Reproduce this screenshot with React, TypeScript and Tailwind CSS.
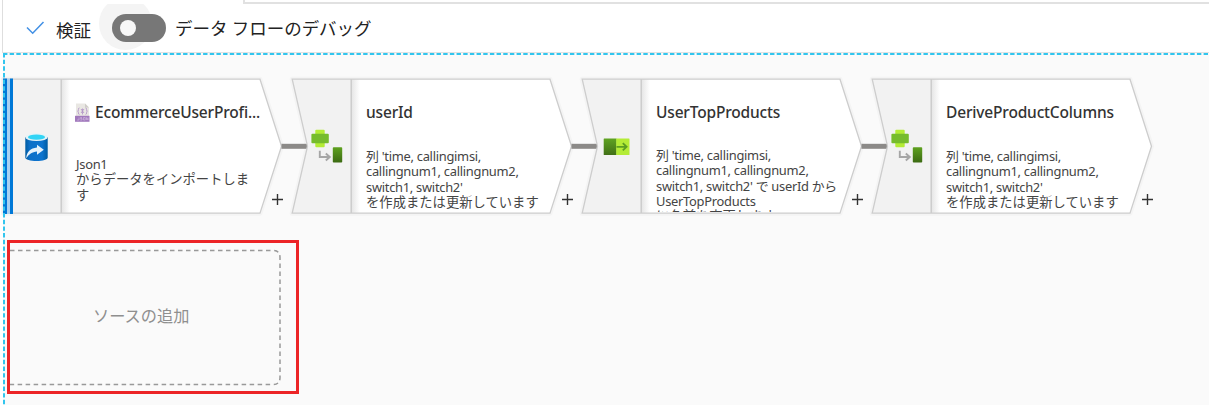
import React from "react";

type Kind = "source" | "derive" | "select";

interface Line {
  text: string;
  cls: string;
}

interface FlowNode {
  id: string;
  kind: Kind;
  title: string;
  lines: Line[];
}

const jp = "tracking-[0.02px] text-[13.3px]";
const lat = "tracking-[-0.28px] text-[12.9px]";

const deriveLines: Line[] = [
  { text: "列 'time, callingimsi,", cls: lat },
  { text: "callingnum1, callingnum2,", cls: lat },
  { text: "switch1, switch2'", cls: lat },
  { text: "を作成または更新しています", cls: jp },
];

const nodes: FlowNode[] = [
  {
    id: "source",
    kind: "source",
    title: "EcommerceUserProfi...",
    lines: [
      { text: "Json1", cls: lat },
      { text: "からデータをインポートしま", cls: jp },
      { text: "す", cls: jp },
    ],
  },
  { id: "userId", kind: "derive", title: "userId", lines: deriveLines },
  {
    id: "top",
    kind: "select",
    title: "UserTopProducts",
    lines: [
      { text: "列 'time, callingimsi,", cls: lat },
      { text: "callingnum1, callingnum2,", cls: lat },
      { text: "switch1, switch2' で userId から", cls: lat },
      { text: "UserTopProducts", cls: lat },
      { text: "に名前を変更します", cls: jp },
    ],
  },
  { id: "columns", kind: "derive", title: "DeriveProductColumns", lines: deriveLines },
];

function SourceIcon() {
  return (
    <svg className="ml-[22px] mt-[1px] shrink-0" width="23" height="29" viewBox="0 0 23 29">
      <defs>
        <linearGradient id="cyl" x1="0" x2="1">
          <stop offset="0" stopColor="#005ba1" />
          <stop offset="0.2" stopColor="#0d70c8" />
          <stop offset="0.75" stopColor="#0d74cf" />
          <stop offset="1" stopColor="#005ba1" />
        </linearGradient>
      </defs>
      <path d="M0.3 4v20.5c0 2 5 3.6 11.2 3.6s11.2-1.6 11.2-3.6V4z" fill="url(#cyl)" />
      <ellipse cx="11.5" cy="4.2" rx="11.2" ry="3.9" fill="#e4f3f7" />
      <ellipse cx="11.5" cy="4.2" rx="8.5" ry="2.6" fill="#32d4f5" />
      <path d="M1.2 25.5C1.6 18.500 5.4 15.300 12 14.500V11.800l6.800 4.900-6.800 5v-3.200C7 19 4 21 1.200 25.500z" fill="#e6f2fb" />
    </svg>
  );
}

function DeriveIcon() {
  return (
    <svg className="ml-[17px] shrink-0" width="34" height="35" viewBox="0 0 34 35">
      <defs>
        <linearGradient id="leaf" x1="0" y1="0" x2="0" y2="1">
          <stop offset="0" stopColor="#5ea11f" />
          <stop offset="1" stopColor="#3c6a13" />
        </linearGradient>
      </defs>
      <rect x="5.3" y="0.8" width="9.4" height="17.4" rx="1" fill="#b4ec36" />
      <rect x="1.4" y="4.7" width="17.4" height="9.6" rx="1" fill="#76bc2d" />
      <path d="M9.8 21.8v6.2h9M15.800 24.500l4 3.500-4 3.500" fill="none" stroke="#a6a6a6" strokeWidth="1.9" />
      <rect x="22.8" y="18.2" width="9.4" height="15.4" rx="0.8" fill="url(#leaf)" />
    </svg>
  );
}

function SelectIcon() {
  return (
    <svg className="ml-[20px] mt-[1px] shrink-0" width="28" height="18" viewBox="0 0 28 18">
      <defs>
        <linearGradient id="block" x1="0" y1="0" x2="0" y2="1">
          <stop offset="0" stopColor="#5fa322" />
          <stop offset="1" stopColor="#416f17" />
        </linearGradient>
      </defs>
      <rect x="0.7" y="0.5" width="13" height="16.6" rx="0.5" fill="url(#block)" />
      <rect x="13.2" y="0.5" width="13.3" height="16.6" rx="0.5" fill="#b4ec36" />
      <path d="M13.5 8.800h10M19.800 5.200l3.800 3.600-3.800 3.600" fill="none" stroke="#5b9e22" strokeWidth="1.800" />
    </svg>
  );
}

function JsonIcon() {
  return (
    <svg width="17" height="20" viewBox="0 0 17 20" className="mr-[4px] shrink-0">
      <path d="M2 .5h9l4 4V18H2z" fill="#e9e7e3" />
      <path d="M11 .5l4 4h-4z" fill="#cfcdc8" />
      <path
        d="M5.500 5q-1.300 0-1.100 1.600T3.600 8.200q1 .1.800 1.600t1.100 1.600M11.500 5q1.300 0 1.100 1.600t.8 1.600q-1 .1-.8 1.600t-1.100 1.600M7 6l3 4M10 6L7 10M8.500 5.500v6"
        fill="none"
        stroke="#b497c8"
        strokeWidth=".9"
      />
      <rect x="1" y="12.800" width="14.500" height="6" fill="#a27abd" />
      <path
        d="M3 17h2v-2.500M8 14.500H6.500v1H8V17H6.200M9.500 14.500h1.700V17H9.500zM12.500 17v-2.500l1.500 2.500v-2.500"
        fill="none"
        stroke="#cdb4dc"
        strokeWidth=".7"
      />
    </svg>
  );
}

function NodeShape({ kind }: { kind: Kind }) {
  const first = kind === "source";
  const outline = first
    ? "M0.5 1.200H257L278.500 68.200 257 135.200H0.500z"
    : "M-.8 1.200H257L278.500 68.200 257 135.200H-.8L14.500 68.200z";
  const side = first ? "M0.500 1.200H58V135.200H0.500z" : "M-.8 1.200H58V135.200H-.8L14.500 68.200z";
  return (
    <svg className="absolute left-0 top-0 overflow-visible" width="280" height="137">
      <defs>
        <linearGradient id="fold" x1="0" x2="1">
          <stop offset="0" stopColor="#e4e4e4" />
          <stop offset="1" stopColor="#ffffff" />
        </linearGradient>
      </defs>
      <path d={outline} fill="#fff" stroke="#f4f4f4" strokeWidth="5" strokeLinejoin="round" />
      {!first && <path d="M-11.500 68.300H14.500" stroke="#8c8a88" strokeWidth="5" />}
      <path d={outline} fill="#fff" />
      <path d={side} fill="#f2f2f2" />
      <rect x="58" y="1" width="9" height="134" fill="url(#fold)" />
      <path d="M58.200 1V135" stroke="#cccccc" strokeWidth="1.500" />
      <path d={outline} fill="none" stroke="#cdcdcd" strokeWidth="1.300" />
      {first && (
        <>
          <path d="M2 .5V136" stroke="#0078d7" strokeWidth="4" />
          <path d="M5.500 .5V136" stroke="#a9d0f1" strokeWidth="3" />
          <path d="M8.500 .5V136" stroke="#0078d7" strokeWidth="3" />
        </>
      )}
    </svg>
  );
}

function NodeCard({ node }: { node: FlowNode }) {
  const isSource = node.kind === "source";
  return (
    <section className="relative h-[137px] w-[290px] shrink-0">
      <NodeShape kind={node.kind} />
      <div className="relative flex h-full">
        <div className="flex w-[58px] shrink-0 items-center">
          {isSource && <SourceIcon />}
          {node.kind === "derive" && <DeriveIcon />}
          {node.kind === "select" && <SelectIcon />}
        </div>
        <div className="flex h-[134px] w-[202px] shrink-0 flex-col overflow-hidden pl-[15px] pt-[23px]">
          <h2
            className={
              "flex h-[24px] shrink-0 items-center whitespace-nowrap text-[15.5px] font-medium tracking-[-0.17px] text-[#333] " +
              (isSource ? "-ml-[2px]" : "")
            }
          >
            {isSource && <JsonIcon />}
            {node.title}
          </h2>
          <div
            className={
              "whitespace-nowrap leading-[15.3px] text-[#444] " +
              (isSource ? "mt-[32px]" : node.kind === "select" ? "mt-[23px]" : "mt-[24px]")
            }
          >
            {node.lines.map((l) => (
              <p key={l.text} className={l.cls}>
                {l.text}
              </p>
            ))}
          </div>
        </div>
        <svg className="ml-[8px] mt-[115px] shrink-0" width="13" height="13">
          <path d="M6.500 1v11M1 6.500h11" stroke="#333" strokeWidth="1.400" />
        </svg>
      </div>
    </section>
  );
}

export default function App() {
  return (
    <div className="flex h-[405px] w-[1209px] flex-col overflow-hidden bg-white font-['Noto_Sans','Noto_Sans_CJK_JP',sans-serif] text-[#333]">
      <header className="ml-[2px] flex h-[53px] shrink-0 flex-col border-b border-l border-b-[#e2e2e2] border-l-[#dedede]">
        <div className="ml-[240px] h-[4px] shrink-0 border-b-2 border-l-2 border-[#e1e1e1]" />
        <div className="flex h-[48px] items-center gap-[9px] pl-[23px]">
          <svg className="shrink-0" width="19" height="16">
            <path d="M1 7.500l5.700 5.700L17.500 2" fill="none" stroke="#4290e5" strokeWidth="1.500" />
          </svg>
          <span className="ml-[2px] mt-[4px] whitespace-nowrap text-[17.5px] leading-[27px] text-[#222]">検証</span>
          <div className="relative ml-[12px] h-[28px] w-[54px] shrink-0">
            <div className="absolute -left-[13px] -top-[10px] h-[46px] w-[53px] overflow-hidden">
              <div className="-mt-[7px] h-[53px] w-[53px] rounded-full bg-[#f4f4f4]" />
            </div>
            <div className="relative flex h-[28px] w-[54px] items-center rounded-full bg-[#777] pl-[8px]">
              <div className="h-[16px] w-[16px] rounded-full bg-[#f7f7f7]" />
            </div>
          </div>
          <span className="mt-[1px] whitespace-nowrap text-[17.5px] leading-[27px] tracking-[-0.05px] text-[#222]">
            データ フローのデバッグ
          </span>
        </div>
      </header>
      <main className="relative ml-[3px] flex grow flex-col items-start gap-[25px] bg-[#fafafa] pt-[25px]">
        <div className="flex">
          {nodes.map((n) => (
            <NodeCard key={n.id} node={n} />
          ))}
        </div>
        <button className="relative ml-[4px] flex h-[154px] w-[292px] items-center border-[3px] border-[#ec2427] pl-[83px] text-[16.2px] leading-[24px] text-[#8f8f8f]">
          <svg className="absolute left-0 top-0" width="286" height="148">
            <path
              d="M0 7.500H263Q270 7.500 270 14.500V134.500Q270 141.500 263 141.500H0"
              fill="none"
              stroke="#999"
              strokeWidth="1.500"
              strokeDasharray="4.500 3.500"
            />
          </svg>
          <span className="-mt-[2px]">ソースの追加</span>
        </button>
        <svg className="absolute left-0 top-0" width="1206" height="352">
          <path d="M0 1H1206" stroke="#32c5ee" strokeWidth="2" strokeDasharray="4.4 2.27" />
          <path d="M1 0V352" stroke="#32c5ee" strokeWidth="2" strokeDasharray="4.4 2.27" />
        </svg>
      </main>
    </div>
  );
}
